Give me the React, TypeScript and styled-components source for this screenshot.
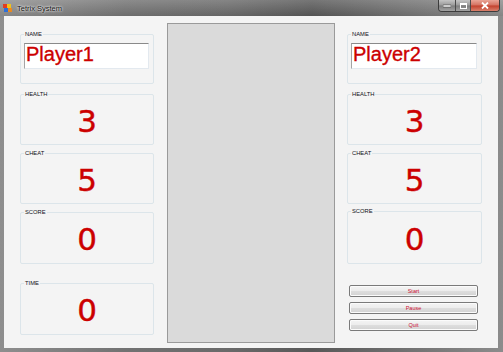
import { FunctionComponent } from "react";
import styled, { createGlobalStyle } from "styled-components";

interface StatRow {
  label: string;
  value: string;
  top: number;
  height: number;
}

const leftStats: StatRow[] = [
  { label: "HEALTH", value: "3", top: 10, height: 51 },
  { label: "CHEAT", value: "5", top: 8, height: 51 },
  { label: "SCORE", value: "0", top: 8, height: 52 },
  { label: "TIME", value: "0", top: 19, height: 52 },
];

const rightStats: StatRow[] = [
  { label: "HEALTH", value: "3", top: 10, height: 51 },
  { label: "CHEAT", value: "5", top: 8, height: 51 },
  { label: "SCORE", value: "0", top: 7, height: 53 },
];

const AppIcon = () => (
  <svg width="10" height="10" viewBox="0 0 10 10">
    <rect x="0" y="1" width="4" height="4" fill="#e23b1f" />
    <rect x="4" y="1" width="4" height="4" fill="#f2c21a" />
    <rect x="1" y="5" width="4" height="4" fill="#2f6fd6" />
    <rect x="5" y="5" width="4" height="4" fill="#e98a22" />
  </svg>
);

const PlayerPanel: FunctionComponent<{ name: string; stats: StatRow[] }> = ({
  name,
  stats,
}) => (
  <>
    <Group $h={50} $mt={0} $top>
      <Legend>NAME</Legend>
      <NameBox>{name}</NameBox>
    </Group>
    {stats.map((s) => (
      <Group key={s.label} $h={s.height} $mt={s.top}>
        <Legend>{s.label}</Legend>
        <Digit>{s.value}</Digit>
      </Group>
    ))}
  </>
);

export default function App() {
  return (
    <Window>
      <GlobalStyle />
      <TitleBar>
        <AppIcon />
        <Title>Tetrix System</Title>
        <Controls>
          <CtrlButton $w={16}>
            <svg width="8" height="4" viewBox="0 0 8 4">
              <rect x="0" y="1" width="8" height="2" fill="#fff" stroke="#333" strokeWidth="0.5" />
            </svg>
          </CtrlButton>
          <CtrlButton $w={14}>
            <svg width="7" height="6" viewBox="0 0 7 6">
              <rect x="0.5" y="0.5" width="6" height="5" fill="none" stroke="#fff" strokeWidth="1" />
              <rect x="0.5" y="0.5" width="6" height="1.5" fill="#fff" />
            </svg>
          </CtrlButton>
          <CtrlButton $w={28} $close>
            <svg width="8" height="7" viewBox="0 0 8 7">
              <path d="M1 0.5 L7 6.5 M7 0.5 L1 6.5" stroke="#fff" strokeWidth="1.8" />
            </svg>
          </CtrlButton>
        </Controls>
      </TitleBar>
      <Client>
        <Column $w={134}>
          <PlayerPanel name="Player1" stats={leftStats} />
        </Column>
        <Board />
        <Column $w={135} $ml={12}>
          <PlayerPanel name="Player2" stats={rightStats} />
          <ButtonStack>
            <Button>Start</Button>
            <Button>Pause</Button>
            <Button>Quit</Button>
          </ButtonStack>
        </Column>
      </Client>
    </Window>
  );
}

const GlobalStyle = createGlobalStyle`
  html, body {
    margin: 0;
    padding: 0;
  }
  body {
    width: 503px;
    height: 352px;
    overflow: hidden;
    font-family: "Liberation Sans", Arial, sans-serif;
  }
`;

const Window = styled.div`
  width: 503px;
  height: 352px;
  display: flex;
  flex-direction: column;
  box-sizing: border-box;
  background: linear-gradient(
    90deg,
    #8e8e8e 0%,
    #727272 25%,
    #6a6a6a 45%,
    #585858 62%,
    #737373 82%,
    #8c8c8c 100%
  );
`;

const TitleBar = styled.div`
  height: 16px;
  display: flex;
  align-items: center;
  padding-left: 3px;
  box-sizing: border-box;
  background: linear-gradient(180deg, rgba(255, 255, 255, 0.18), rgba(0, 0, 0, 0.05));
`;

const Title = styled.span`
  margin-left: 4px;
  font-size: 7.5px;
  color: #151515;
  text-shadow: 0 0 2px #fff, 0 0 3px rgba(255, 255, 255, 0.9);
`;

const Controls = styled.div`
  align-self: flex-start;
  margin-left: auto;
  margin-right: 3px;
  display: flex;
  height: 11px;
  border: 1px solid #3c3c3c;
  border-top: none;
  border-radius: 0 0 4px 4px;
  overflow: hidden;
`;

const CtrlButton = styled.div<{ $w: number; $close?: boolean }>`
  width: ${(p) => p.$w}px;
  display: flex;
  align-items: center;
  justify-content: center;
  border-left: 1px solid #4a4a4a;
  &:first-child {
    border-left: none;
  }
  background: ${(p) =>
    p.$close
      ? "linear-gradient(180deg, #e9a597 0%, #d4705f 48%, #c2402c 52%, #d9806c 100%)"
      : "linear-gradient(180deg, #c4c4c4 0%, #999 48%, #7c7c7c 52%, #a2a2a2 100%)"};
`;

const Client = styled.div`
  flex: 1;
  margin: 0 5px 4px 4px;
  background: #f4f4f4;
  display: flex;
  align-items: flex-start;
  padding-left: 16px;
`;

const Column = styled.div<{ $w: number; $ml?: number }>`
  width: ${(p) => p.$w}px;
  margin-left: ${(p) => p.$ml ?? 0}px;
  margin-top: 18px;
  display: flex;
  flex-direction: column;
`;

const Board = styled.div`
  width: 168px;
  height: 320px;
  margin-left: 13px;
  margin-top: 7px;
  box-sizing: border-box;
  border: 1px solid #9a9a9a;
  background: #dadada;
`;

const Group = styled.div<{ $h: number; $mt: number; $top?: boolean }>`
  position: relative;
  box-sizing: border-box;
  height: ${(p) => p.$h}px;
  margin-top: ${(p) => p.$mt}px;
  border: 1px solid #dce5ea;
  border-radius: 2px;
  display: flex;
  justify-content: center;
  align-items: ${(p) => (p.$top ? "flex-start" : "center")};
  padding: ${(p) => (p.$top ? "8px 4px 0 3px" : "3px 0 0 0")};
`;

const Legend = styled.span`
  position: absolute;
  top: -4px;
  left: 3px;
  padding: 0 1px;
  font-size: 5.8px;
  line-height: 7px;
  color: #101020;
  background: #f4f4f4;
`;

const NameBox = styled.div`
  flex: 1;
  height: 26px;
  box-sizing: border-box;
  background: #fff;
  border: 1px solid #e3e9ef;
  border-top-color: #8a8a8a;
  border-left-color: #a4a4a4;
  padding-left: 1px;
  font-size: 20px;
  line-height: 20px;
  color: #cc0000;
  -webkit-text-stroke: 0.35px #cc0000;
  overflow: hidden;
`;

const Digit = styled.span`
  font-family: "DejaVu Sans", sans-serif;
  font-size: 31px;
  line-height: 1;
  color: #cc0000;
  -webkit-text-stroke: 0.4px #cc0000;
`;

const ButtonStack = styled.div`
  margin-top: 21px;
  margin-left: 2px;
  width: 129px;
  display: flex;
  flex-direction: column;
  gap: 5px;
`;

const Button = styled.div`
  height: 12px;
  box-sizing: border-box;
  border: 1px solid #7a7a7a;
  border-radius: 2px;
  box-shadow: inset 0 0 0 1px #fbfbfb;
  background: linear-gradient(180deg, #f4f4f4 0%, #ececec 50%, #dedede 51%, #d2d2d2 100%);
  display: flex;
  align-items: center;
  justify-content: center;
  font-size: 5.5px;
  color: #cc1133;
`;
